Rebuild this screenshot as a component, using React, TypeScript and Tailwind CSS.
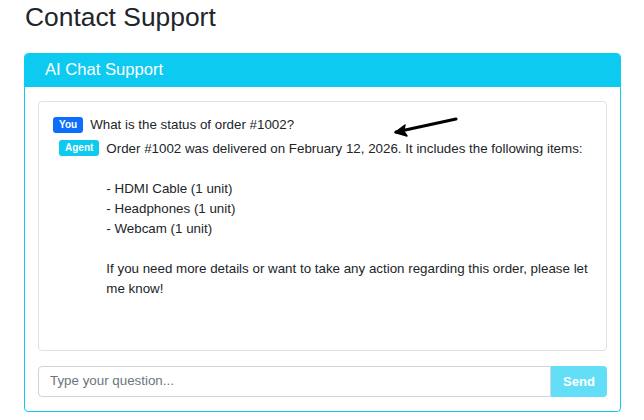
export default function App() {
  const agentReply = `Order #1002 was delivered on February 12, 2026. It includes the following items:

- HDMI Cable (1 unit)
- Headphones (1 unit)
- Webcam (1 unit)

If you need more details or want to take any action regarding this order, please let me know!`;

  return (
    <div className="relative w-[644px] h-[420px] bg-white px-[24px] pt-[2px] font-['Liberation_Sans',Arial,sans-serif] text-[#212529]">
      <h3 className="text-[26.4px] leading-[31px] pl-[1px] mb-[20px]">Contact Support</h3>

      {/* Chat card */}
      <div className="w-[597px] h-[359px] border border-[#0dcaf0] rounded-[4px] flex flex-col overflow-hidden">
        <div className="bg-[#0dcaf0] text-white text-[16.6px] h-[34px] flex items-center px-[20px]">
          AI Chat Support
        </div>
        <div className="flex-1 px-[13px] pt-[14px] pb-[14px] flex flex-col">
          <div className="h-[250px] border border-[#dee2e6] rounded-[4px] px-[14px] pt-[13px] text-[13.35px] leading-[20px] overflow-hidden">
            <div className="flex items-start">
              <span className="mt-[2px] bg-[#0d6efd] text-white text-[10px] font-bold leading-[10px] px-[6px] py-[3px] rounded-[3px]">
                You
              </span>
              <span className="ml-[7px]">What is the status of order #1002?</span>
            </div>
            <div className="flex items-start mt-[4px] pl-[6px]">
              <span className="mt-[1px] shrink-0 bg-[#0dcaf0] text-white text-[10px] font-bold leading-[10px] px-[6px] py-[3px] rounded-[3px]">
                Agent
              </span>
              <p className="ml-[7px] whitespace-pre-line pr-[2px]">{agentReply}</p>
            </div>
          </div>
          <div className="flex mt-[15px] h-[31px]">
            <input
              className="flex-1 border border-[#ced4da] rounded-l-[4px] px-[11px] text-[13.35px] outline-none placeholder:text-[#6c757d]"
              placeholder="Type your question..."
            />
            <button className="w-[56px] bg-[#62dff6] text-white text-[13px] font-bold rounded-r-[4px]">
              Send
            </button>
          </div>
        </div>
      </div>

      {/* annotation arrow */}
      <svg className="absolute left-[390px] top-[114px]" width="72" height="24" viewBox="0 0 72 24">
        <path d="M66 5 L6 18" stroke="#000" strokeWidth="3" strokeLinecap="round" fill="none" />
        <path d="M5 18.5 L15 11 L13.5 17 L17 22 Z" fill="#000" stroke="#000" strokeWidth="1.5" strokeLinejoin="round" />
      </svg>
    </div>
  );
}
